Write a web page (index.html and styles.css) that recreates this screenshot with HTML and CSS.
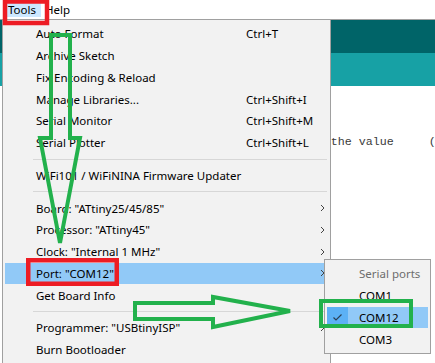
FILE: index.html
```html
<!DOCTYPE html>
<html lang="en">
<head>
    <meta charset="UTF-8">
    <meta name="viewport" content="width=device-width, initial-scale=1.0">
    <title>Tools menu</title>
    <link rel="stylesheet" href="styles.css">
</head>
<body>

    <div class="menubar">
        <span class="menubar-item active">Tools</span>
        <span class="menubar-item">Help</span>
    </div>

    <div class="workspace">
        <div class="toolbar"></div>
        <div class="tabs"></div>
        <div class="editor">void loop() {
  // put your main code here:
  int sensorValue = analogRead(A0);   // read the value     (
  delay(10);
}




void setup() {
  Serial.begin(9600);
  pinMode(LED_BUILTIN, OUTPUT);  // initialize the pin     +
}</div>

        <div class="menu tools-menu">
            <div class="item"><span>Auto Format</span><span class="key">Ctrl+T</span></div>
            <div class="item"><span>Archive Sketch</span></div>
            <div class="item"><span>Fix Encoding &amp; Reload</span></div>
            <div class="item"><span>Manage Libraries...</span><span class="key">Ctrl+Shift+I</span></div>
            <div class="item"><span>Serial Monitor</span><span class="key">Ctrl+Shift+M</span></div>
            <div class="item"><span>Serial Plotter</span><span class="key">Ctrl+Shift+L</span></div>
            <div class="sep"></div>
            <div class="item"><span>WiFi101 / WiFiNINA Firmware Updater</span></div>
            <div class="sep"></div>
            <div class="item"><span>Board: "ATtiny25/45/85"</span><span></span>
                <svg class="chevron" width="5" height="8" viewBox="0 0 5 8"><polyline points="1,1 4,4 1,7"/></svg></div>
            <div class="item"><span>Processor: "ATtiny45"</span><span></span>
                <svg class="chevron" width="5" height="8" viewBox="0 0 5 8"><polyline points="1,1 4,4 1,7"/></svg></div>
            <div class="item"><span>Clock: "Internal 1 MHz"</span><span></span>
                <svg class="chevron" width="5" height="8" viewBox="0 0 5 8"><polyline points="1,1 4,4 1,7"/></svg></div>
            <div class="item selected"><span>Port: "COM12"</span><span></span>
                <svg class="chevron" width="5" height="8" viewBox="0 0 5 8"><polyline points="1,1 4,4 1,7"/></svg></div>
            <div class="item"><span>Get Board Info</span></div>
            <div class="sep"></div>
            <div class="item"><span>Programmer: "USBtinyISP"</span><span></span>
                <svg class="chevron" width="5" height="8" viewBox="0 0 5 8"><polyline points="1,1 4,4 1,7"/></svg></div>
            <div class="item"><span>Burn Bootloader</span></div>
        </div>

        <div class="menu ports-menu">
            <div class="port-item header"><span class="check"></span><span class="label">Serial ports</span></div>
            <div class="port-item"><span class="check"></span><span class="label">COM1</span></div>
            <div class="port-item selected">
                <span class="check"><svg width="9" height="7" viewBox="0 0 9 7"><polyline points="0.5,3.5 3,6 8.5,0.5"/></svg></span>
                <span class="label">COM12</span>
            </div>
            <div class="port-item"><span class="check"></span><span class="label">COM3</span></div>
        </div>
    </div>

    <svg class="marks" width="435" height="363" viewBox="0 0 435 363">
        <rect class="red" x="5" y="1.5" width="42" height="21.5"/>
        <rect class="red" x="28.25" y="260.25" width="88.5" height="23.5"/>
        <polygon class="green" points="51,35 70,35 70,138 80,138 60,243 40,138 51,138"/>
        <polygon class="green" points="135,303 213,303 213,297 290,311 213,327 213,319 135,319"/>
        <rect class="green" x="321" y="301" width="90" height="25"/>
    </svg>

</body>
</html>
```

FILE: styles.css
```css
* {
    box-sizing: border-box;
}

body {
    margin: 0;
    width: 435px;
    height: 363px;
    overflow: hidden;
    position: relative;
    background: #fff;
    font-family: 'Noto Sans', sans-serif;
    font-size: 11.5px;
    color: #000;
}

.menubar {
    height: 20px;
    border-bottom: 1px solid #a0a0a0;
    display: flex;
    align-items: flex-start;
    padding: 3px 0 0 6px;
}

.menubar-item {
    height: 14px;
    line-height: 14px;
    padding: 0 2px;
}

.menubar-item.active {
    background: #cce8ff;
    padding-right: 5px;
    margin-right: 2px;
}

.workspace {
    position: relative;
    height: 343px;
}

.toolbar {
    height: 33px;
    background: #006468;
}

.tabs {
    height: 33px;
    background: #17a1a5;
}

.editor {
    padding: 14px 0 0 9px;
    font-family: 'Liberation Mono', monospace;
    font-size: 11.67px;
    line-height: 17px;
    color: #3a3a3a;
    white-space: pre;
}

.menu {
    position: absolute;
    background: #f2f2f2;
    border: 1px solid #a0a0a0;
    padding: 3px 0;
}

.tools-menu {
    left: 2px;
    top: -1px;
    width: 329px;
}

.item {
    display: grid;
    grid-template-columns: 210px 1fr 8px;
    align-items: center;
    height: 21.75px;
    margin: 0 2px;
    padding-left: 31px;
    white-space: nowrap;
}

.item.selected {
    background: #91c9f7;
}

.chevron {
    display: block;
    fill: none;
    stroke: #444;
    stroke-width: 1;
}

.sep {
    height: 11px;
    display: flex;
    align-items: center;
    margin: 0 3px 0 30px;
}

.sep::before {
    content: '';
    flex: 1;
    height: 1px;
    background: #d7d7d7;
}

.ports-menu {
    left: 324px;
    top: 239px;
    width: 107px;
}

.port-item {
    display: flex;
    align-items: center;
    height: 21.75px;
    margin: 0 2px;
}

.port-item .check {
    width: 21px;
    height: 100%;
    display: flex;
    align-items: center;
    justify-content: center;
}

.port-item .label {
    padding-left: 11px;
}

.port-item.header {
    color: #6d6d6d;
}

.port-item.selected {
    background: #91c9f7;
}

.port-item.selected .check {
    background: #5cb1f5;
}

.check svg {
    fill: none;
    stroke: #2b3f55;
    stroke-width: 1.2;
}

.marks {
    position: absolute;
    left: 0;
    top: 0;
    pointer-events: none;
}

.marks .red {
    fill: none;
    stroke: #ed1c24;
    stroke-width: 4.5;
}

.marks .green {
    fill: none;
    stroke: #22b14c;
    stroke-width: 4;
    stroke-linejoin: miter;
}
```
